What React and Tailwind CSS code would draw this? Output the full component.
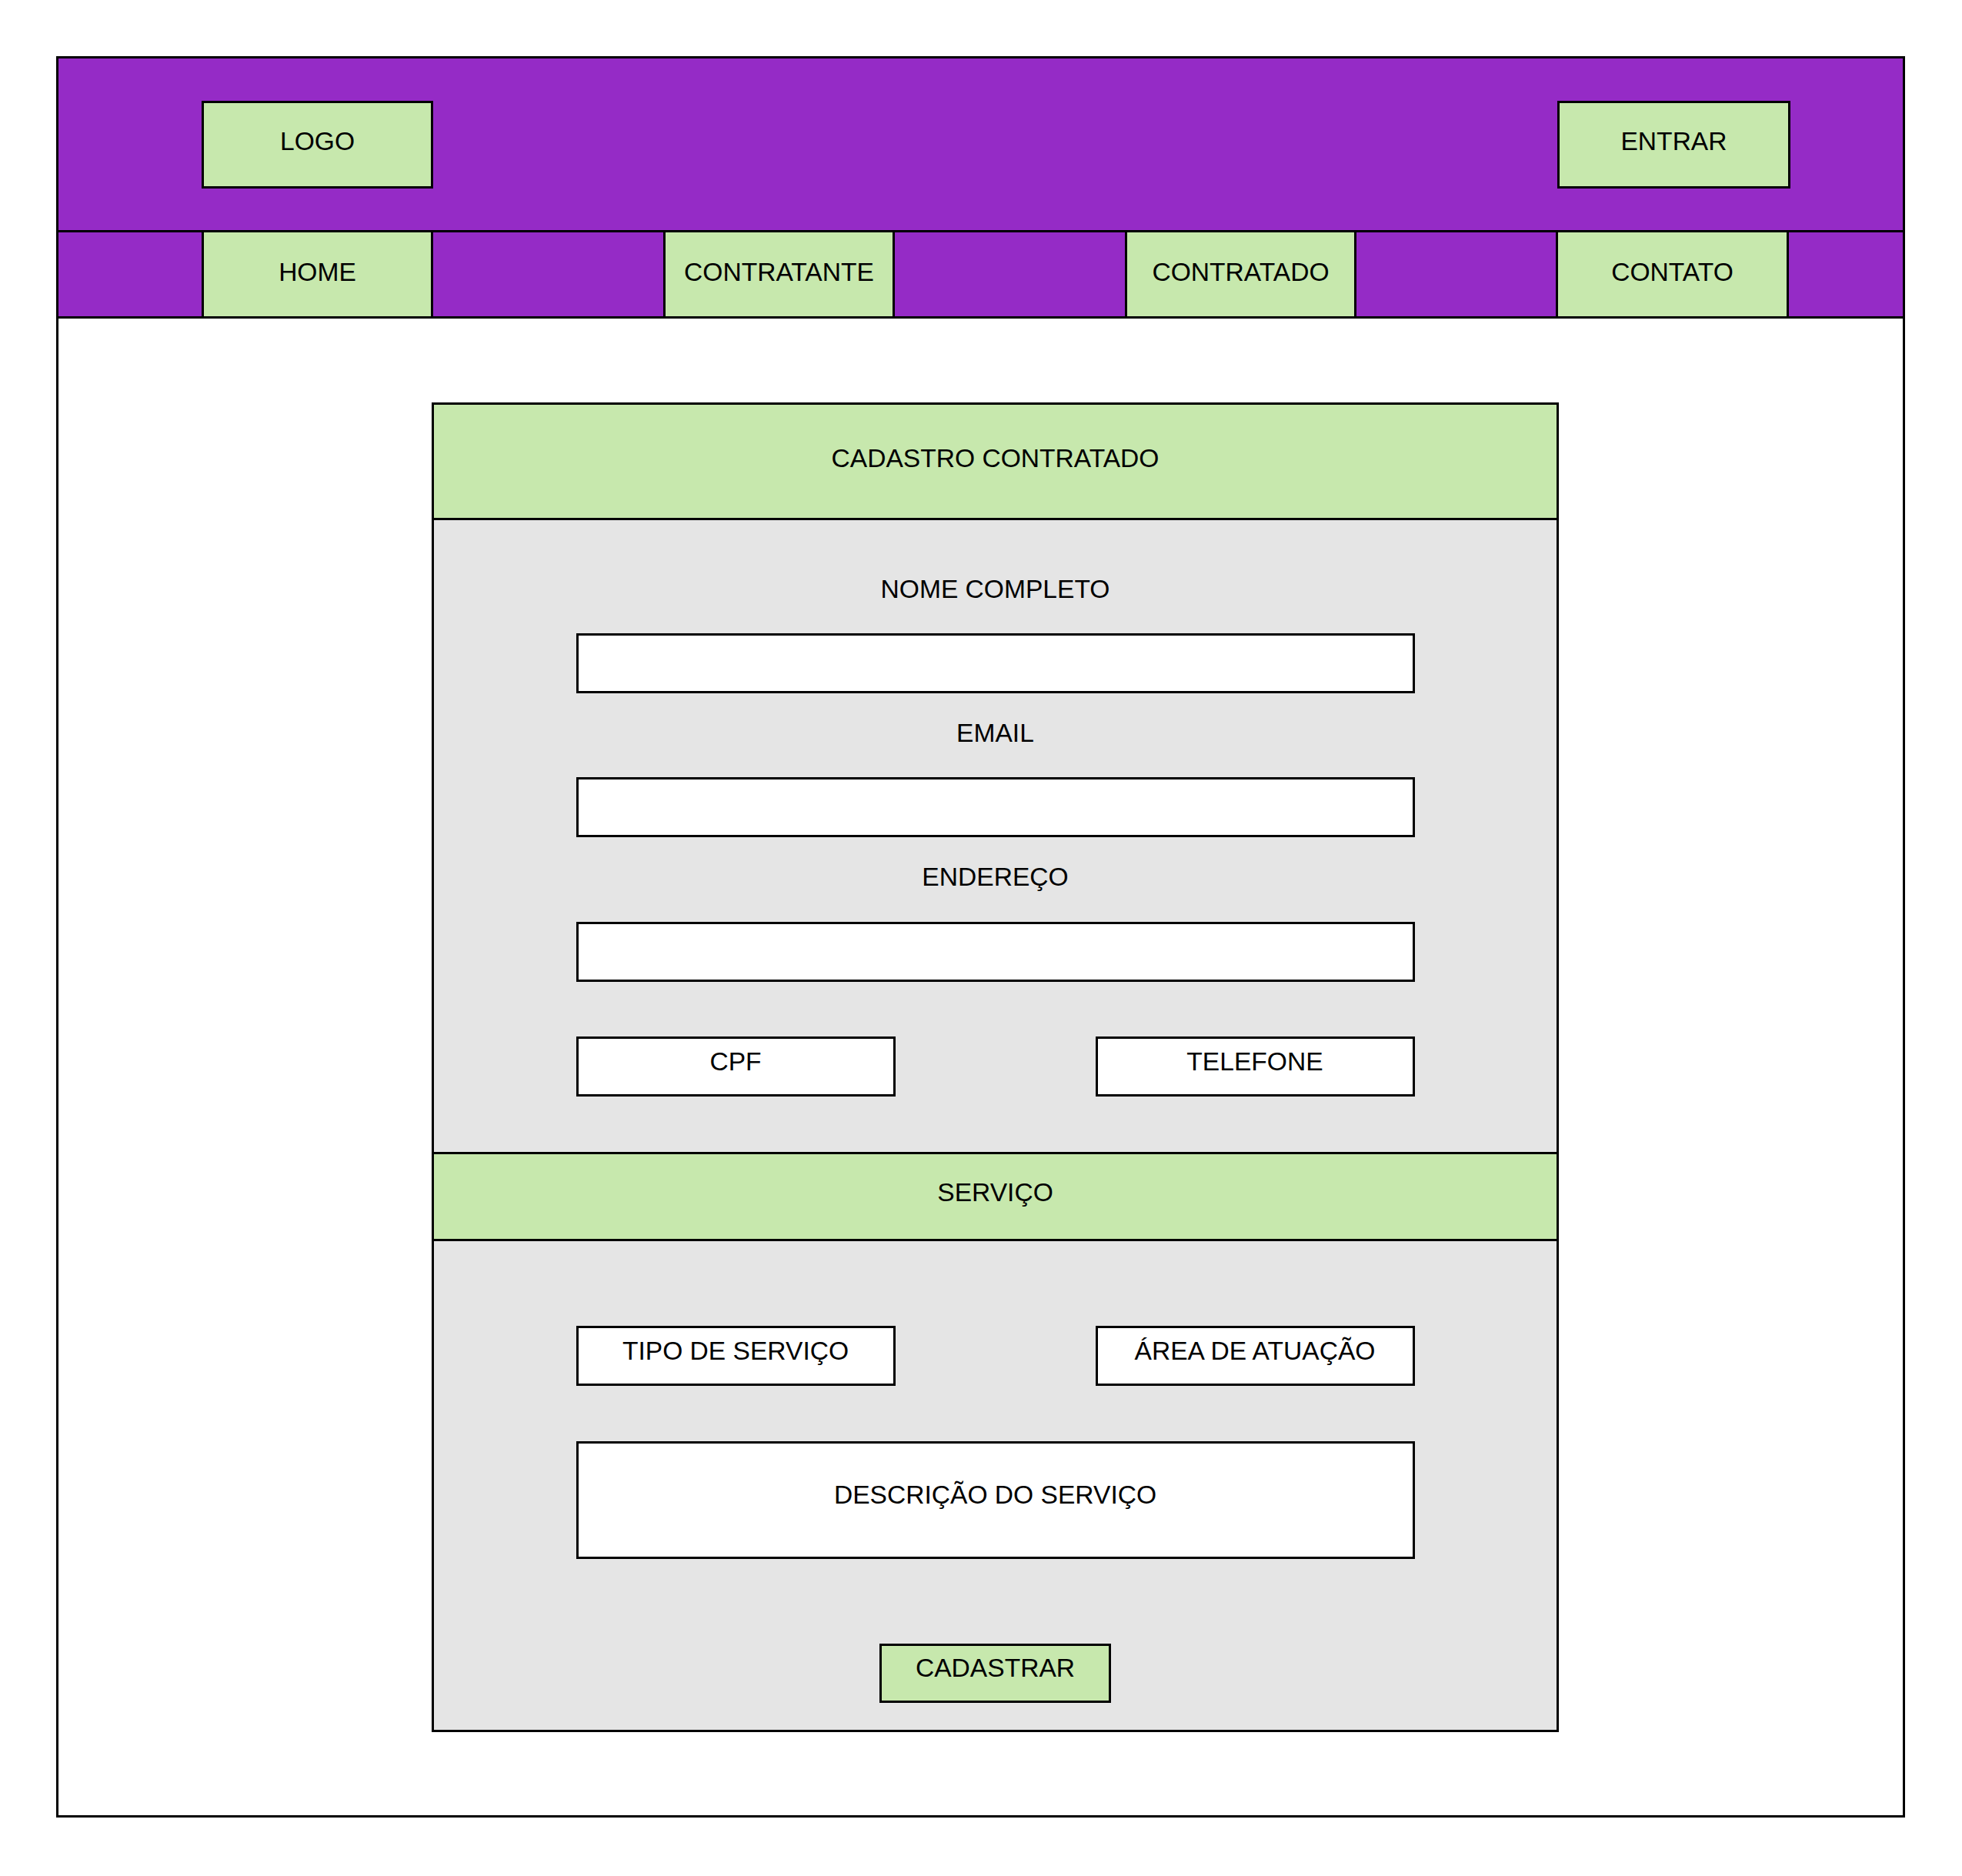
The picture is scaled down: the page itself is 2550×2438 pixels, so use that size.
import React from "react";

// wireframe: cadastro de contratado
const boxGreen = "bg-[#c7e8ad] border-[3px] border-black flex items-center justify-center";
const boxWhite = "bg-white border-[3px] border-black flex items-center justify-center";

const NavItem = ({ label, className = "" }) => (
    <div className={`h-full bg-[#c7e8ad] border-x-[3px] border-black flex items-center justify-center pb-[4px] ${className}`}>
        {label}
    </div>
);

const Label = ({ text, className = "" }) => (
    <div className={`h-[40px] leading-[40px] ${className}`}>{text}</div>
);

const Input = ({ className = "" }) => (
    <div className={`w-[1090px] h-[78px] bg-white border-[3px] border-black ${className}`} />
);

const App = () => {
    return (
        <div className="w-[2550px] h-[2438px] bg-white pt-[73px] pl-[73px] font-['Liberation_Sans',Arial,sans-serif] text-[33.6px] text-black">
            <div className="w-[2403px] h-[2289px] border-[3px] border-black flex flex-col">
                {/* header */}
                <div className="h-[226px] bg-[#952bc6] border-b-[3px] border-black flex items-center justify-between pl-[186px] pr-[146px]">
                    <div className={`w-[301px] h-[114px] pb-[6px] ${boxGreen}`}>LOGO</div>
                    <div className={`w-[303px] h-[114px] pb-[6px] ${boxGreen}`}>ENTRAR</div>
                </div>

                {/* menu */}
                <div className="h-[112px] bg-[#952bc6] border-b-[3px] border-black flex pl-[186px]">
                    <NavItem label="HOME" className="w-[301px]" />
                    <NavItem label="CONTRATANTE" className="w-[301px] ml-[299px]" />
                    <NavItem label="CONTRATADO" className="w-[301px] ml-[299px]" />
                    <NavItem label="CONTATO" className="w-[303px] ml-[259px]" />
                </div>

                {/* conteudo */}
                <div className="flex-1 pt-[109px] pl-[485px]">
                    <div className="w-[1465px] h-[1728px] bg-[#e5e5e5] border-[3px] border-black flex flex-col">
                        <div className="h-[150px] bg-[#c7e8ad] border-b-[3px] border-black flex items-center justify-center pb-[6px]">
                            CADASTRO CONTRATADO
                        </div>

                        <div className="h-[821px] pt-[70px] flex flex-col items-center">
                            <Label text="NOME COMPLETO" />
                            <Input className="mt-[37px]" />
                            <Label text="EMAIL" className="mt-[32px]" />
                            <Input className="mt-[37px]" />
                            <Label text="ENDEREÇO" className="mt-[32px]" />
                            <Input className="mt-[38px]" />
                            <div className="w-[1090px] flex justify-between mt-[71px]">
                                <div className={`w-[415px] h-[78px] pb-[12px] ${boxWhite}`}>CPF</div>
                                <div className={`w-[415px] h-[78px] pb-[12px] ${boxWhite}`}>TELEFONE</div>
                            </div>
                        </div>

                        <div className="h-[116px] bg-[#c7e8ad] border-y-[3px] border-black flex items-center justify-center pb-[10px]">
                            SERVIÇO
                        </div>

                        <div className="flex-1 pt-[110px] flex flex-col items-center">
                            <div className="w-[1090px] flex justify-between">
                                <div className={`w-[415px] h-[78px] pb-[12px] ${boxWhite}`}>TIPO DE SERVIÇO</div>
                                <div className={`w-[415px] h-[78px] pb-[12px] ${boxWhite}`}>ÁREA DE ATUAÇÃO</div>
                            </div>
                            <div className={`w-[1090px] h-[153px] mt-[72px] pb-[12px] ${boxWhite}`}>
                                DESCRIÇÃO DO SERVIÇO
                            </div>
                            <button className={`w-[301px] h-[77px] mt-[110px] pb-[12px] ${boxGreen}`}>
                                CADASTRAR
                            </button>
                        </div>
                    </div>
                </div>
            </div>
        </div>
    );
};

export default App;
